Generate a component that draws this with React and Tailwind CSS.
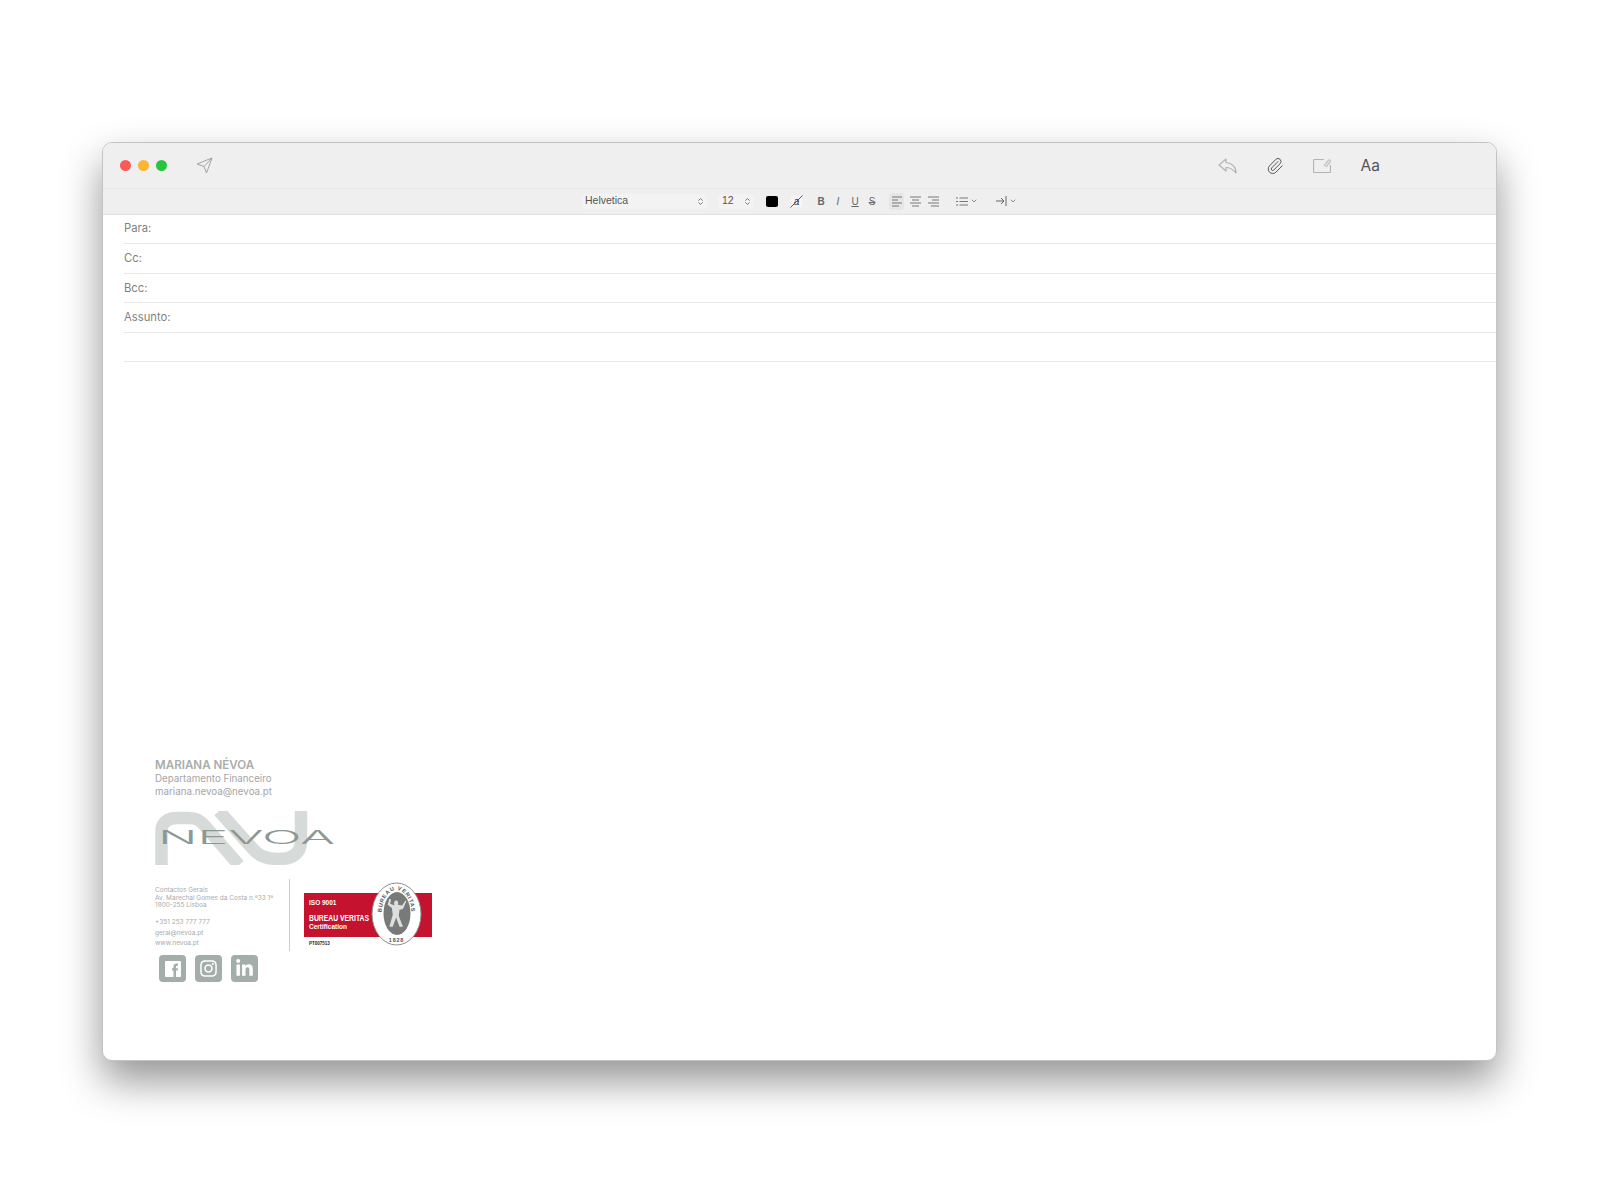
import React from 'react';
import { ChevronDown, ChevronsUpDown, Paperclip } from 'lucide-react';
import { FaInstagram, FaLinkedinIn } from 'react-icons/fa';

const AlignIcon = ({ lines }) => (
  <svg width="13" height="11" viewBox="0 0 13 11" fill="none" stroke="#777" strokeWidth="1">
    {lines.map(([x1, x2], i) => (
      <line key={i} x1={x1} x2={x2} y1={1 + i * 3} y2={1 + i * 3} />
    ))}
  </svg>
);

const FormatBar = () => (
  <div className="flex items-center h-[24.5px] pl-[479px] text-[#555] font-['Liberation_Sans',sans-serif]">
    <div className="flex items-center justify-between w-[125px] h-[15px] pl-[3px] pr-[2px] bg-[#f3f3f3] rounded-[3px] text-[10.500px]">
      Helvetica
      <ChevronsUpDown size={9} strokeWidth={2} />
    </div>
    <div className="flex items-center justify-between w-[36px] h-[15px] ml-[11px] pl-[4px] pr-[2px] bg-[#f3f3f3] rounded-[3px] text-[10.500px]">
      12
      <ChevronsUpDown size={9} strokeWidth={2} />
    </div>
    <div className="w-[12px] h-[11px] ml-[12px] bg-black rounded-[2px]" />
    <svg className="ml-[12px]" width="13" height="13" viewBox="0 0 13 13">
      <rect x="1" y="1" width="11" height="11" fill="#f6f6f6" />
      <text x="6.5" y="10" fontSize="10" fontStyle="italic" textAnchor="middle" fill="#333" fontFamily="Liberation Sans">a</text>
      <line x1="0.5" y1="12.5" x2="12.5" y2="0.5" stroke="#d0232b" strokeWidth="1" />
    </svg>
    <div className="flex items-center gap-[9px] ml-[14px] text-[10px] text-[#666]">
      <span className="w-[8px] text-center font-bold">B</span>
      <span className="w-[8px] text-center italic">I</span>
      <span className="w-[8px] text-center underline">U</span>
      <span className="w-[8px] text-center line-through">S</span>
    </div>
    <div className="flex items-center ml-[13px]">
      <div className="flex items-center justify-center w-[15px] h-[17px] bg-[#e6e6e6] rounded-[3px]">
        <AlignIcon lines={[[2, 12], [2, 8], [2, 12], [2, 9]]} />
      </div>
      <div className="ml-[5px]">
        <AlignIcon lines={[[1, 12], [3, 10], [1, 12], [3, 10]]} />
      </div>
      <div className="ml-[5px]">
        <AlignIcon lines={[[1, 12], [5, 12], [1, 12], [4, 12]]} />
      </div>
    </div>
    <div className="flex items-center ml-[16px]">
      <svg width="12" height="9" viewBox="0 0 12 9" stroke="#777" strokeWidth="1">
        <line x1="0" x2="2" y1="1" y2="1" />
        <line x1="0" x2="2" y1="4.5" y2="4.5" />
        <line x1="0" x2="2" y1="8" y2="8" />
        <line x1="3.5" x2="12" y1="1" y2="1" />
        <line x1="3.5" x2="12" y1="4.5" y2="4.5" />
        <line x1="3.5" x2="12" y1="8" y2="8" />
      </svg>
      <ChevronDown size={8} strokeWidth={2} className="ml-[2px]" />
    </div>
    <div className="flex items-center ml-[18px]">
      <svg width="11" height="10" viewBox="0 0 11 10" fill="none" stroke="#666" strokeWidth="1">
        <path d="M0 5H8M5 2l3 3-3 3M10 0v10" />
      </svg>
      <ChevronDown size={8} strokeWidth={2} className="ml-[2px]" />
    </div>
  </div>
);

const TitleBar = () => (
  <div className="flex items-center h-[46px] pl-[17px] border-b border-[#e6e6e6]">
    <div className="w-[11px] h-[11px] rounded-full bg-[#fb5a57]" />
    <div className="w-[11px] h-[11px] ml-[7px] rounded-full bg-[#fdb52f]" />
    <div className="w-[11px] h-[11px] ml-[7px] rounded-full bg-[#27c63f]" />
    <svg className="ml-[29px]" width="17" height="17" viewBox="0 0 17 17" fill="none" stroke="#a3a3a3" strokeWidth="1" strokeLinejoin="round">
      <path d="M16 1 1 7l7 2.5L10.500 16ZM16 1 8 9.500" />
    </svg>
    <div className="flex items-center ml-auto mr-[116px]">
      <svg width="19" height="16" viewBox="0 0 19 16" fill="none" stroke="#b4b4b4" strokeWidth="1.200" strokeLinejoin="round">
        <path d="M8 1 1 7l7 6V9.500c4 0 7 2 10 5.500 0-6-4-10-10-10.500Z" />
      </svg>
      <Paperclip className="ml-[29px]" size={18} strokeWidth={1.3} color="#555" />
      <svg className="ml-[29px]" width="18" height="15" viewBox="0 0 18 15" fill="none">
        <path d="M11 1.500H1.500a1 1 0 0 0-1 1V13.500a1 1 0 0 0 1 1H16.500a1 1 0 0 0 1-1V7" stroke="#b4b4b4" strokeWidth="1.200" />
        <path d="m11 8 4.500-6a1.500 1.500 0 0 1 2 1.500L13 9" stroke="#c4c4c4" strokeWidth="1.300" />
      </svg>
      <span className="ml-[30px] text-[15.500px] text-[#555] font-['Inter',sans-serif]">Aa</span>
    </div>
  </div>
);

const HeaderRow = ({ label }) => (
  <div className="flex items-center h-[29.6px] ml-[21px] border-b border-[#e8e8e8] text-[11.250px] text-[#7f7f7f] font-['Inter',sans-serif]">
    {label}
  </div>
);

const NevoaLogo = () => (
  <svg width="181" height="54" viewBox="0 0 181 54" fill="none">
    <g stroke="#d6dbd9" strokeWidth="12.500">
      <path d="M6.500 54V20C6.500 11 13 7 22 7H34C42 7 46 10 50 15L84 54" />
      <path d="M64 0 98 38C105 46 113 48 124 48 138 48 146 42 146 30V0" />
    </g>
    <text x="3" y="33" fontSize="18" fontWeight="300" fill="#8d9895" fontFamily="Inter" textLength="177" lengthAdjust="spacingAndGlyphs">NEVOA</text>
  </svg>
);

const BureauVeritas = () => (
  <svg width="128" height="68" viewBox="0 0 128 68">
    <rect x="0" y="14" width="128" height="44" fill="#c4122f" />
    <g fill="#fff" fontFamily="Liberation Sans" fontWeight="700">
      <text x="5" y="26" fontSize="6.500">ISO 9001</text>
      <text x="5" y="42" fontSize="8.500" textLength="60" lengthAdjust="spacingAndGlyphs">BUREAU VERITAS</text>
      <text x="5" y="50" fontSize="6.500">Certification</text>
    </g>
    <text x="5" y="66" fontSize="4.500" fontWeight="700" fill="#222" fontFamily="Liberation Sans">PT007513</text>
    <ellipse cx="92.500" cy="35" rx="24.500" ry="31" fill="#fff" stroke="#8c8f8d" strokeWidth="1" />
    <ellipse cx="93" cy="34.500" rx="13.500" ry="21.500" fill="#777a78" />
    <g transform="translate(93 35) scale(0.85) translate(-94 -31)">
      <path d="M93 15c2 0 3 2 2 5l5 1 4-6 1 1-4 9-4 1-1 7 5 13h-4l-4-11-4 11h-4l4-14-1-8-5-4 2-7 2 1-1 5 5 2c-1-3 0-6 2-6Z" fill="#dddfde" />
    </g>
    <defs>
      <path id="bvArc" d="M79.500 47A15 24 0 1 1 105.500 47" />
    </defs>
    <text fontSize="5.500" fontWeight="700" fill="#555" fontFamily="Liberation Sans" letterSpacing="0.700">
      <textPath href="#bvArc" startOffset="50%" textAnchor="middle">BUREAU VERITAS</textPath>
    </text>
    <text x="92.500" y="63" fontSize="5.500" fontWeight="700" fill="#555" fontFamily="Liberation Sans" textAnchor="middle" letterSpacing="0.800">1828</text>
  </svg>
);

const SocialTile = ({ children }) => (
  <div className="flex items-center justify-center w-[27px] h-[27px] rounded-[4px] bg-[#a3aeaa] text-white">
    {children}
  </div>
);

const Signature = () => (
  <div className="ml-[52px] mt-[396px] text-[#a5a5a5] font-['Inter',sans-serif]">
    <p className="text-[11.600px] leading-[14px] font-semibold text-[#a9adab]">MARIANA NÉVOA</p>
    <p className="text-[9.750px] leading-[13px]">Departamento Financeiro</p>
    <p className="text-[9.750px] leading-[13px]">mariana.nevoa@nevoa.pt</p>
    <div className="mt-[13px]">
      <NevoaLogo />
    </div>
    <div className="flex mt-[14px]">
      <div className="w-[134px] pt-[8px] text-[6.500px] leading-[7.500px] text-[#aaa]">
        <p>Contactos Gerais</p>
        <p>Av. Marechal Gomes da Costa n.º33 1º</p>
        <p>1800-255 Lisboa</p>
        <p className="mt-[9px]">+351 253 777 777</p>
        <p className="mt-[4px]">geral@nevoa.pt</p>
        <p className="mt-[2px]">www.nevoa.pt</p>
      </div>
      <div className="w-px h-[72px] bg-[#ccc]" />
      <div className="ml-[14px]">
        <BureauVeritas />
      </div>
    </div>
    <div className="flex gap-[9px] ml-[4px] mt-[4px]">
      <SocialTile>
        <svg width="16" height="16" viewBox="0 0 16 16">
          <rect width="16" height="16" rx="1" fill="#fff" />
          <path d="M8.500 16V9.500H7V7.200h1.500V5.500C8.500 3.700 9.600 2.500 11.500 2.500H13V4.800H12C11.200 4.800 11 5.200 11 5.800V7.200H13L12.700 9.500H11V16Z" fill="#a3aeaa" />
        </svg>
      </SocialTile>
      <SocialTile><FaInstagram size={19} /></SocialTile>
      <SocialTile><FaLinkedinIn size={19} /></SocialTile>
    </div>
  </div>
);

const App = () => (
  <div className="w-[1600px] h-[1200px] pt-[142px] pl-[102px] bg-white overflow-hidden">
    <div className="w-[1395px] h-[919px] bg-white rounded-[10px] border border-[#c4c4c4] overflow-hidden shadow-[0_20px_40px_rgba(0,0,0,0.42)]">
      <div className="bg-[#efefef] border-b border-[#e2e2e2]">
        <TitleBar />
        <FormatBar />
      </div>
      <HeaderRow label="Para:" />
      <HeaderRow label="Cc:" />
      <HeaderRow label="Bcc:" />
      <HeaderRow label="Assunto:" />
      <HeaderRow label="" />
      <Signature />
    </div>
  </div>
);

export default App;
